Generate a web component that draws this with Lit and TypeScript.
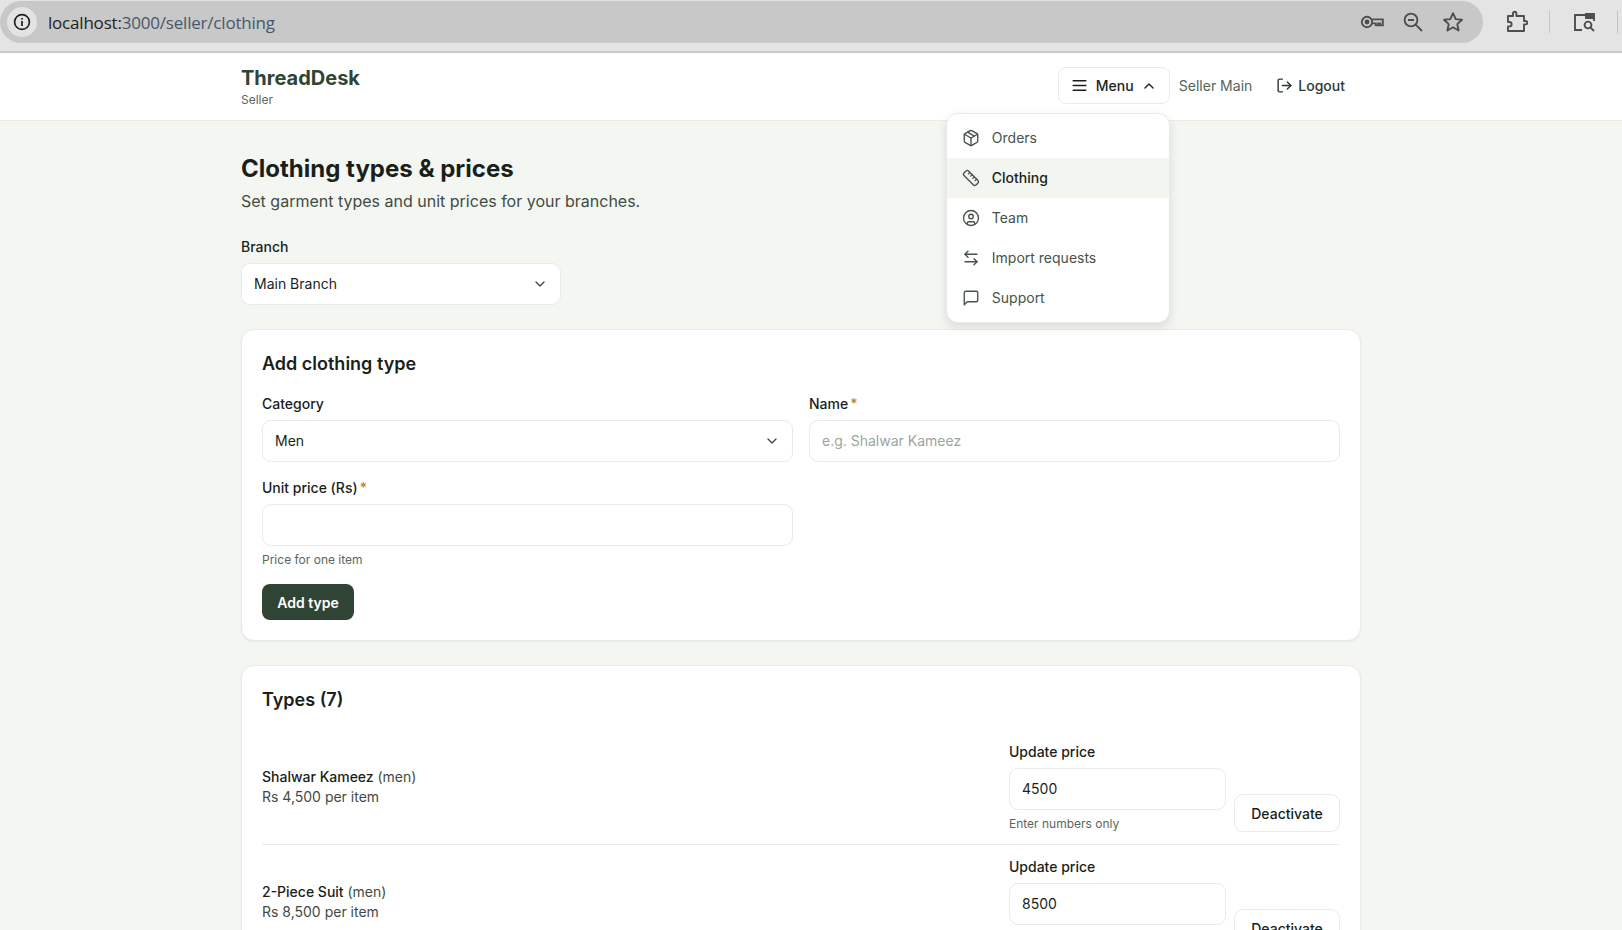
import { LitElement, html, css, svg } from "lit";
import { customElement } from "lit/decorators.js";

const icon = (body: unknown, size = 18, sw = 2) => html`<svg class="ic" width=${size} height=${size} viewBox="0 0 24 24" fill="none" stroke="currentColor" stroke-width=${sw} stroke-linecap="round" stroke-linejoin="round">${body}</svg>`;

const chevDown = svg`<path d="m6 9 6 6 6-6"/>`;
const chevUp = svg`<path d="m18 15-6-6-6 6"/>`;
const menuLines = svg`<path d="M4 6h16M4 12h16M4 18h16"/>`;
const logout = svg`<path d="M9 21H5a2 2 0 0 1-2-2V5a2 2 0 0 1 2-2h4"/><path d="m16 17 5-5-5-5"/><path d="M21 12H9"/>`;
const pkg = svg`<path d="M11 21.73a2 2 0 0 0 2 0l7-4A2 2 0 0 0 21 16V8a2 2 0 0 0-1-1.73l-7-4a2 2 0 0 0-2 0l-7 4A2 2 0 0 0 3 8v8a2 2 0 0 0 1 1.73z"/><path d="M12 22V12"/><path d="M3.29 7 12 12l8.71-5"/><path d="m7.5 4.27 9 5.15"/>`;
const ruler = svg`<path d="M21.3 15.3a2.4 2.4 0 0 1 0 3.4l-2.6 2.6a2.4 2.4 0 0 1-3.4 0L2.7 8.7a2.41 2.41 0 0 1 0-3.4l2.6-2.6a2.41 2.41 0 0 1 3.4 0Z"/><path d="m14.5 12.5 2-2M11.5 9.5l2-2M8.5 6.5l2-2M17.5 15.5l2-2"/>`;
const user = svg`<circle cx="12" cy="12" r="10"/><circle cx="12" cy="10" r="3"/><path d="M7 20.662V19a2 2 0 0 1 2-2h6a2 2 0 0 1 2 2v1.662"/>`;
const swap = svg`<path d="M8 3 4 7l4 4"/><path d="M4 7h16"/><path d="m16 21 4-4-4-4"/><path d="M20 17H4"/>`;
const chat = svg`<path d="M21 15a2 2 0 0 1-2 2H7l-4 4V5a2 2 0 0 1 2-2h14a2 2 0 0 1 2 2z"/>`;

const menuItems = [
  { label: "Orders", icon: pkg },
  { label: "Clothing", icon: ruler, active: true },
  { label: "Team", icon: user },
  { label: "Import requests", icon: swap },
  { label: "Support", icon: chat },
];

const types = [
  { name: "Shalwar Kameez", cat: "men", price: "4,500", value: "4500" },
  { name: "2-Piece Suit", cat: "men", price: "8,500", value: "8500" },
];

@customElement("browser-bar")
export class BrowserBar extends LitElement {
  static styles = css`
    :host {
      display: flex;
      align-items: flex-start;
      flex: none;
      background: #e4e4e4;
      border-bottom: 2px solid #c9c9c9;
      color: #4c4f4d;
    }
    .pill {
      flex: none;
      width: 1483px;
      height: 42px;
      margin-top: 1px;
      background: #c8c8c8;
      border-radius: 21px;
      display: flex;
      align-items: center;
      box-sizing: border-box;
      padding: 0 19px 0 7px;
    }
    .info {
      width: 30px;
      height: 30px;
      border-radius: 50%;
      background: #e3e3e3;
      display: flex;
      align-items: center;
      justify-content: center;
      color: #1f1f1f;
    }
    .url {
      margin-left: 11px;
      font: 400 17px "Open Sans", sans-serif;
      letter-spacing: -0.2px;
      color: #46586a;
      flex: 1;
    }
    .url b { font-weight: 400; color: #1f1f1f; }
    .acts { display: flex; align-items: center; gap: 18px; }
    .tools { display: flex; align-items: center; height: 44px; }
    .tools .ext { margin-left: 23px; }
    .sep { width: 1px; height: 22px; background: #c4c4c4; }
    .tools .sep.a { margin-left: 21px; }
    .tools .side { margin-left: 23px; }
    .tools .sep.b { margin-left: 20px; }
    svg { display: block; }
  `;

  render() {
    return html`
      <div class="pill">
        <div class="info">
          <svg width="18" height="18" viewBox="0 0 18 18" fill="none" stroke="currentColor" stroke-width="1.7"><circle cx="9" cy="9" r="7.4"/><path d="M9 8v5M9 5v1.6"/></svg>
        </div>
        <div class="url"><b>localhost:</b>3000/seller/clothing</div>
        <div class="acts">
          <svg width="24" height="24" viewBox="0 0 24 24" fill="none" stroke="currentColor" stroke-width="1.9"><circle cx="7" cy="12" r="5.2"/><circle cx="7" cy="12" r="1.5" fill="currentColor"/><path d="M12.2 9.4h10.6v6h-2.6v-2h-2v2h-2.4v-2h-3.6"/></svg>
          <svg width="22" height="22" viewBox="0 0 22 22" fill="none" stroke="currentColor" stroke-width="1.9"><circle cx="9" cy="9" r="6.4"/><path d="M13.7 13.7 20 20M6 9h6"/></svg>
          <svg width="22" height="22" viewBox="0 0 22 22" fill="none" stroke="currentColor" stroke-width="1.9" stroke-linejoin="round"><path d="m11 2.2 2.7 5.9 6.3.7-4.7 4.3 1.3 6.4L11 16.3l-5.6 3.2 1.3-6.4L2 8.8l6.3-.7z"/></svg>
        </div>
      </div>
      <div class="tools">
        <svg class="ext" width="22" height="24" viewBox="0 0 22 24" fill="none" stroke="currentColor" stroke-width="1.9" stroke-linejoin="round"><path d="M2 6h5V3.4a1.7 1.7 0 0 1 3.4 0V6h7.6v5h1.6a1.7 1.7 0 0 1 0 3.4H18V21H2v-4.6h1.4a2 2 0 0 0 0-4.4H2z"/></svg>
        <div class="sep a"></div>
        <svg class="side" width="24" height="24" viewBox="0 0 24 24" fill="none" stroke="currentColor" stroke-width="1.9"><path d="M9 20H2V5h19v6"/><path d="M13 4h8v4h-8z" fill="currentColor"/><circle cx="15" cy="15" r="3.4"/><path d="m17.6 17.6 3.4 3.4"/></svg>
        <div class="sep b"></div>
      </div>
    `;
  }
}

@customElement("app-root")
export class AppRoot extends LitElement {
  static styles = css`
    :host {
      display: flex;
      flex-direction: column;
      height: 100vh;
      overflow: hidden;
      background: #f4f6f2;
      font-family: Inter, "Liberation Sans", sans-serif;
      color: #1a1f1b;
      font-size: 14px;
    }
    * { box-sizing: border-box; }
    svg { display: block; flex: none; }
    browser-bar { height: 53px; }
    .top {
      flex: none;
      height: 68px;
      background: #fff;
      border-bottom: 1px solid #e8ebe6;
    }
    .wrap {
      width: 1120px;
      margin-left: 241px;
    }
    .top .wrap {
      height: 100%;
      display: flex;
      align-items: center;
      justify-content: space-between;
      padding-right: 16px;
    }
    .brand { font-size: 20px; font-weight: 700; color: #2f4434; line-height: 24px; margin-top: 1px; }
    .role { font-size: 12px; color: #5b665e; line-height: 16px; margin-top: 2px; }
    nav { display: flex; align-items: center; margin-bottom: 2px; }
    .menu-wrap { position: relative; }
    .menu-btn {
      display: flex;
      align-items: center;
      height: 37px;
      width: 112px;
      padding: 0 11px;
      gap: 7px;
      background: #fff;
      border: 1px solid #e8ebe6;
      border-radius: 8px;
      font: 500 14px Inter, sans-serif;
      color: #1a1f1b;
    }
    .dropdown {
      position: absolute;
      top: 46px;
      right: 0;
      width: 224px;
      padding: 4px 0 4px;
      background: #fff;
      border: 1px solid #e8ebe6;
      border-radius: 12px;
      box-shadow: 0 4px 10px rgba(30, 45, 35, 0.13);
      z-index: 5;
    }
    .item {
      display: flex;
      align-items: center;
      height: 40px;
      padding: 0 15px;
      gap: 12px;
      color: #465349;
    }
    .item > * { margin-top: -1px; }
    .item.on { background: #f3f5f1; color: #1a1f1b; font-weight: 500; }
    .item .ic { color: #465349; }
    .link { color: #56635a; margin-left: 9px; }
    .logout {
      display: flex;
      align-items: center;
      gap: 5px;
      margin-left: 24px;
      color: #2b3a30;
      font-weight: 500;
    }
    main { padding-top: 32px; }
    h1 { margin: 0; font-size: 24px; font-weight: 700; line-height: 32px; color: #1a1f1b; }
    .sub { margin: 4px 0 0; font-size: 16px; line-height: 24px; color: #3f4c43; }
    .branch { width: 320px; margin-top: 24px; }
    label { display: block; font-weight: 500; line-height: 20px; margin-bottom: 6px; color: #1a1f1b; }
    .req { color: #c97f2a; margin-left: 2px; }
    .sel { position: relative; }
    .sel .ic { position: absolute; right: 13px; top: 13px; color: #3f4c43; pointer-events: none; }
    select, input {
      display: block;
      width: 100%;
      height: 42px;
      padding: 0 12px 2px;
      border: 1px solid #e8ebe6;
      border-radius: 9px;
      background: #fff;
      font: 400 14px Inter, sans-serif;
      color: #1a1f1b;
      appearance: none;
      outline: none;
    }
    input::placeholder { color: #9aa69e; }
    .card {
      background: #fff;
      border: 1px solid #e8ebe6;
      border-radius: 13px;
      box-shadow: 0 1px 2px rgba(30, 45, 35, 0.06);
      padding: 20px;
      margin-top: 24px;
    }
    h2 { margin: 0; font-size: 18px; font-weight: 600; line-height: 28px; color: #1a1f1b; }
    .grid {
      display: grid;
      grid-template-columns: 1fr 1fr;
      gap: 16px;
      margin-top: 16px;
    }
    .hint { font-size: 12px; line-height: 16px; margin-top: 6px; color: #5b665e; }
    .add {
      display: block;
      width: 92px;
      height: 36px;
      margin-top: 16px;
      border: none;
      border-radius: 8px;
      background: #2f4434;
      color: #fff;
      font: 600 14px Inter, sans-serif;
    }
    .rows { margin-top: 16px; }
    .row {
      display: flex;
      align-items: center;
      gap: 8px;
      padding: 12px 0;
      border-bottom: 1px solid #e8ebe6;
    }
    .info { flex: 1; line-height: 20px; }
    .info .nm { font-weight: 500; }
    .info .nm span { font-weight: 400; color: #3f4c43; }
    .info .pr { color: #3f4c43; }
    .upd { width: 217px; }
    .deact {
      align-self: flex-end;
      width: 106px;
      height: 38px;
      background: #fff;
      border: 1px solid #e8ebe6;
      border-radius: 9px;
      font: 500 14px Inter, sans-serif;
      color: #1a1f1b;
    }
  `;

  render() {
    return html`
      <browser-bar></browser-bar>
      <header class="top">
        <div class="wrap">
          <div>
            <div class="brand">ThreadDesk</div>
            <div class="role">Seller</div>
          </div>
          <nav>
            <div class="menu-wrap">
              <button class="menu-btn">${icon(menuLines, 19, 1.8)} Menu ${icon(chevUp, 16)}</button>
              <div class="dropdown">
                ${menuItems.map((m) => html`<div class="item ${m.active ? "on" : ""}">${icon(m.icon, 18, 1.8)}<span>${m.label}</span></div>`)}
              </div>
            </div>
            <span class="link">Seller Main</span>
            <span class="logout">${icon(logout, 17)} Logout</span>
          </nav>
        </div>
      </header>
      <main class="wrap">
        <h1>Clothing types &amp; prices</h1>
        <p class="sub">Set garment types and unit prices for your branches.</p>
        <div class="branch">
          <label>Branch</label>
          <div class="sel"><select><option>Main Branch</option></select>${icon(chevDown, 16)}</div>
        </div>
        <section class="card">
          <h2>Add clothing type</h2>
          <div class="grid">
            <div>
              <label>Category</label>
              <div class="sel"><select><option>Men</option></select>${icon(chevDown, 16)}</div>
            </div>
            <div>
              <label>Name<span class="req">*</span></label>
              <input placeholder="e.g. Shalwar Kameez" />
            </div>
            <div>
              <label>Unit price (Rs)<span class="req">*</span></label>
              <input />
              <div class="hint">Price for one item</div>
            </div>
          </div>
          <button class="add">Add type</button>
        </section>
        <section class="card">
          <h2>Types (7)</h2>
          <div class="rows">
            ${types.map((t) => html`
              <div class="row">
                <div class="info">
                  <div class="nm">${t.name} <span>(${t.cat})</span></div>
                  <div class="pr">Rs ${t.price} per item</div>
                </div>
                <div class="upd">
                  <label>Update price</label>
                  <input .value=${t.value} />
                  <div class="hint">Enter numbers only</div>
                </div>
                <button class="deact">Deactivate</button>
              </div>
            `)}
          </div>
        </section>
      </main>
    `;
  }
}
